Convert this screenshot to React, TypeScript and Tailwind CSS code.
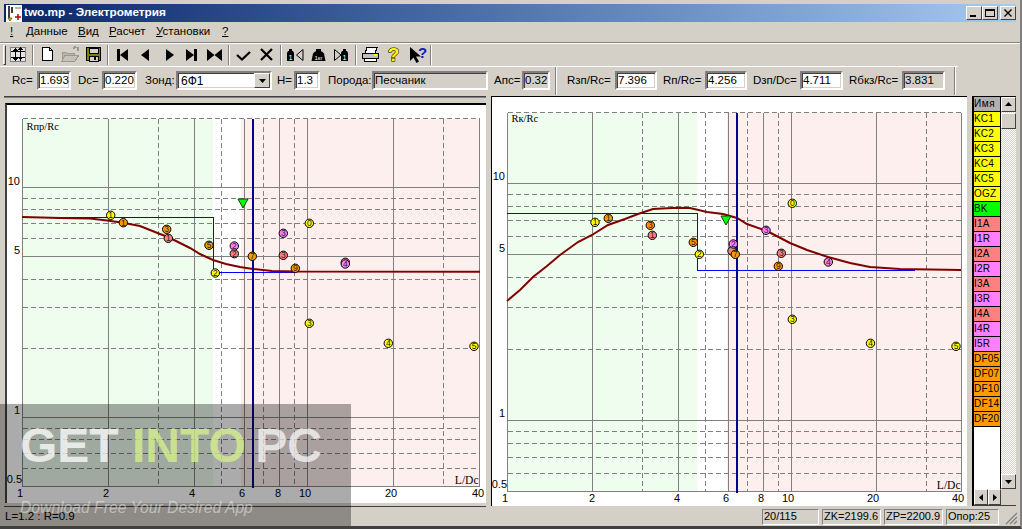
import React from 'react';

const raised = 'border border-t-white border-l-white border-r-[#404040] border-b-[#404040] bg-[#d4d0c8]';
const sunken = 'border-2 border-t-[#808080] border-l-[#808080] border-r-white border-b-white shadow-[inset_1px_1px_0_#404040,inset_-1px_-1px_0_#d4d0c8]';

const YEL = '#ffff00';
const ORG = '#ff9900';
const SAL = '#ff8080';
const VIO = '#ff80ff';

type Pt = [number, number, string, string];

interface ChartProps {
  ox: number;
  oy: number;
  w: number;
  h: number;
  left: number;
  decadeX: number;
  y10: number;
  decadeY: number;
  greenEnd: number;
  whiteEnd: number;
  title: string;
  curve: string;
  step: string;
  cursor: number;
  tri: [number, number];
  points: Pt[];
  xLabels: [string, number][];
  yLabels: [string, number, number][];
  xLabelY: number;
  titleY: number;
}

function Chart(p: ChartProps) {
  const X = (v: number) => Math.round(p.left + p.decadeX * Math.log10(v)) + 0.5;
  const Y = (v: number) => Math.round(p.y10 + p.decadeY * (1 - Math.log10(v))) + 0.5;
  const x1 = X(1);
  const x40 = X(40);
  const top = Y(20);
  const bottom = Y(0.5);
  return (
    <svg
      width={p.w}
      height={p.h}
      viewBox={`${p.ox} ${p.oy} ${p.w} ${p.h}`}
      className="block font-['Liberation_Sans',sans-serif]"
    >
      <rect x={x1} y={top} width={p.greenEnd - x1} height={bottom - top} fill="#effdee" />
      <rect x={p.whiteEnd} y={top} width={x40 - p.whiteEnd} height={bottom - top} fill="#fdefed" />
      <g stroke="#808080" strokeWidth="1" shapeRendering="crispEdges" fill="none">
        {[3, 5, 7, 9, 30].map((v) => (
          <line key={v} x1={X(v)} x2={X(v)} y1={top} y2={bottom} strokeDasharray="5 3" />
        ))}
        {[1, 2, 4, 6, 8, 10, 20, 40].map((v) => (
          <line key={v} x1={X(v)} x2={X(v)} y1={top} y2={bottom} />
        ))}
        {[20, 9, 8, 7, 6, 4, 3, 2, 0.9, 0.8, 0.7, 0.6].map((v) => (
          <line key={v} x1={x1} x2={x40} y1={Y(v)} y2={Y(v)} strokeDasharray="5 3" />
        ))}
        {[10, 5, 1, 0.5].map((v) => (
          <line key={v} x1={x1} x2={x40} y1={Y(v)} y2={Y(v)} />
        ))}
      </g>
      <polyline points={p.step} fill="none" stroke="#0000ff" strokeWidth="1" shapeRendering="crispEdges" />
      <polyline points={p.curve} fill="none" stroke="#800000" strokeWidth="2" />
      <line x1={p.cursor} x2={p.cursor} y1={top} y2={bottom + 1} stroke="#000090" strokeWidth="2" shapeRendering="crispEdges" />
      <polygon
        points={`${p.tri[0] - 5},${p.tri[1]} ${p.tri[0] + 5},${p.tri[1]} ${p.tri[0]},${p.tri[1] + 9}`}
        fill="#00ff00"
        stroke="#104010"
        strokeWidth="1"
      />
      {p.points.map(([x, y, c, t], i) => (
        <g key={i}>
          <circle cx={x} cy={y} r="4.2" fill={c} stroke="#000" strokeWidth="1" />
          {t && (
            <text x={x} y={y + 3} fontSize="8.5" textAnchor="middle" fill="#222">
              {t}
            </text>
          )}
        </g>
      ))}
      <text x={x1 + 4} y={p.titleY} fontSize="10.5" className="font-['Liberation_Serif',serif]">
        {p.title}
      </text>
      <text x={x40 - 1} y={bottom - 3} fontSize="11.5" textAnchor="end" className="font-['Liberation_Serif',serif]">
        L/Dc
      </text>
      {p.xLabels.map(([t, x]) => (
        <text key={t} x={x} y={p.xLabelY} fontSize="11" textAnchor="middle">
          {t}
        </text>
      ))}
      {p.yLabels.map(([t, x, y]) => (
        <text key={t} x={x} y={y} fontSize="11" textAnchor="end">
          {t}
        </text>
      ))}
    </svg>
  );
}

const leftChart: ChartProps = {
  ox: 7,
  oy: 105,
  w: 479,
  h: 398,
  left: 22,
  decadeX: 285,
  y10: 187,
  decadeY: 230,
  greenEnd: 213,
  whiteEnd: 241,
  title: 'Rпр/Rc',
  titleY: 130,
  cursor: 253,
  tri: [243, 199],
  curve:
    '22,217 32,217.3 60,218 90,218.5 107,220.5 123,222.7 140,226 160,234 168,237 190,248 200,254 213,260 226,264 240,267 253,269 272,271 296,271.6 480,271.8',
  step: '22,217.5 213.5,217.5 213.5,272.5 296,272.5',
  xLabelY: 497,
  xLabels: [['1', 20], ['2', 106], ['4', 192], ['6', 242], ['8', 278], ['10', 305], ['20', 391], ['40', 478]],
  yLabels: [['10', 20, 185], ['5', 20, 254], ['1', 20, 414], ['0.5', 22, 483]],
  points: [
    [110.7, 215.3, YEL, '1'], [123.3, 222.7, ORG, '1'], [166.7, 229.3, ORG, '3'], [168.3, 238.3, SAL, '1'],
    [209, 245.3, ORG, '5'], [215.3, 273, YEL, '2'], [234.3, 253.7, SAL, '2'], [234.3, 246, VIO, '2'],
    [252.3, 256.3, ORG, '7'], [283.3, 233.3, VIO, '3'], [283.3, 255.3, SAL, '3'], [295.3, 268.3, ORG, '9'],
    [309.3, 223.3, YEL, '0'], [345.3, 262.3, SAL, ''], [345.3, 264, VIO, '4'], [309.3, 323.3, YEL, '3'],
    [388.3, 343.3, YEL, '4'], [474, 346.3, YEL, '5'],
  ],
};

const rightChart: ChartProps = {
  ox: 492,
  oy: 97,
  w: 475,
  h: 409,
  left: 507,
  decadeX: 283.5,
  y10: 183,
  decadeY: 237,
  greenEnd: 697,
  whiteEnd: 727,
  title: 'Rк/Rc',
  titleY: 122,
  cursor: 737,
  tri: [726, 216],
  curve:
    '507,301 520,290 533,277 547,266 560,255 578,242 592,235 608,225 625,219 638,214 653,209 677,207.7 690,208 707,212 723,214 737,218 747,224 767,231 790,243 807,250 828,257 850,263 870,267 900,269 961,270',
  step: '507,213.5 697.5,213.5 697.5,270.5 915,270.5',
  xLabelY: 502,
  xLabels: [['1', 505], ['2', 592], ['4', 677], ['6', 726], ['8', 761], ['10', 788], ['20', 873], ['40', 958]],
  yLabels: [['10', 505, 180], ['5', 505, 252], ['1', 505, 417], ['0.5', 507, 488]],
  points: [
    [595, 222.3, YEL, '1'], [608.3, 218.3, ORG, '1'], [650.3, 225.3, ORG, '3'], [652.3, 235.3, SAL, '1'],
    [693.3, 242.3, ORG, '5'], [699.3, 254.3, YEL, '2'], [732, 251, SAL, ''], [733.3, 244, VIO, '2'],
    [735.3, 254.3, ORG, '7'], [766, 230.3, VIO, '3'], [781.3, 253.3, SAL, '3'], [778.3, 266.3, ORG, '9'],
    [792.3, 203.3, YEL, '0'], [828.3, 262, VIO, '4'], [792.3, 319.3, YEL, '3'], [870.5, 343.3, YEL, '4'],
    [956, 346.3, YEL, '5'],
  ],
};

const rows: [string, string][] = [
  ['KC1', 'bg-[#ffff00]'], ['KC2', 'bg-[#ffff00]'], ['KC3', 'bg-[#ffff00]'], ['KC4', 'bg-[#ffff00]'],
  ['KC5', 'bg-[#ffff00]'], ['OGZ', 'bg-[#ffff00]'], ['BK', 'bg-[#00ff00]'], ['I1A', 'bg-[#ff8080]'],
  ['I1R', 'bg-[#ff80ff]'], ['I2A', 'bg-[#ff8080]'], ['I2R', 'bg-[#ff80ff]'], ['I3A', 'bg-[#ff8080]'],
  ['I3R', 'bg-[#ff80ff]'], ['I4A', 'bg-[#ff8080]'], ['I4R', 'bg-[#ff80ff]'], ['I5R', 'bg-[#ff80ff]'],
  ['DF05', 'bg-[#ff9900]'], ['DF07', 'bg-[#ff9900]'], ['DF10', 'bg-[#ff9900]'], ['DF14', 'bg-[#ff9900]'],
  ['DF20', 'bg-[#ff9900]'],
];

// toolbar icons, all drawn on a 23x22 box
function Ico({ children }: { children: React.ReactNode }) {
  return (
    <div className="w-[23px] h-[22px] shrink-0">
      <svg width="23" height="22" viewBox="0 1 23 22" className="block">
        {children}
      </svg>
    </div>
  );
}

function Sep() {
  return <div className="w-[2px] h-[20px] mx-[2px] shrink-0 border-l border-l-[#808080] border-r border-r-white" />;
}

const icons = {
  tune: (
    <g shapeRendering="crispEdges">
      <rect x="3.5" y="4.5" width="15" height="14" fill="#e4e4e4" stroke="#808080" />
      <path d="M4 8.5h14M4 14.5h14" stroke="#000" />
      <path d="M8.5 5v13M13.5 5v13" stroke="#000" />
      <path d="M6 8l2.5-3 2.5 3zM6 15l2.5 3 2.5-3zM11 7l2.5-3 2.5 3zM11 14l2.5 3 2.5-3z" fill="#000" />
    </g>
  ),
  doc: (
    <path d="M6.5 4.5h7l3 3v10h-10zM13.5 4.5v3h3" fill="#fff" stroke="#000" shapeRendering="crispEdges" />
  ),
  open: (
    <g shapeRendering="crispEdges">
      <path d="M3 9h4l1 1h7v8H3z" fill="#b8b4ac" stroke="#a09c94" />
      <path d="M6 12h14l-4 6H3z" fill="#c6c2ba" stroke="#9c9890" />
      <path d="M14 6l2-2 3 1v3" fill="none" stroke="#9c9890" strokeWidth="1.5" />
    </g>
  ),
  save: (
    <g shapeRendering="crispEdges">
      <rect x="4.5" y="4.5" width="14" height="13" fill="#808000" stroke="#000" />
      <rect x="7" y="5" width="9" height="5" fill="#d4d0c8" stroke="#000" />
      <rect x="7" y="13" width="9" height="5" fill="#d4d0c8" stroke="#000" />
      <rect x="12" y="14" width="2" height="3" fill="#000" />
    </g>
  ),
  first: <path d="M6 6h3v12H6zM17 6v12l-8-6z" fill="#000" />,
  prev: <path d="M15 6v12l-8-6z" fill="#000" />,
  next: <path d="M9 6v12l8-6z" fill="#000" />,
  last: <path d="M6 6v12l8-6zM14 6h3v12h-3z" fill="#000" />,
  both: <path d="M4 6v12l7.500-6zM11.500 12l7.500-6v12z" fill="#000" />,
  check: <path d="M5 12l5 4.500L18 9" fill="none" stroke="#000" strokeWidth="2.200" />,
  cross: <path d="M6 6l11 11M17 6L6 17" fill="none" stroke="#000" strokeWidth="2.200" />,
  prevWeight: (
    <g>
      <path d="M5 6h3v2h1l1 2v8H3v-8l1-2h1z" fill="#000" />
      <text x="6.500" y="16.500" fontSize="7.500" textAnchor="middle" fill="#fff">1</text>
      <path d="M19 6.500v11l-6.500-5.500z" fill="none" stroke="#000" />
    </g>
  ),
  weight: (
    <g>
      <path d="M9 6h5v2.500h1l2 2 1.500 7.500H4.500L6 10.500l2-2h1z" fill="#000" />
      <text x="11.500" y="17" fontSize="6" textAnchor="middle" fill="#fff">1кг</text>
    </g>
  ),
  nextWeight: (
    <g>
      <path d="M4.500 6.500v11l6.500-5.500z" fill="none" stroke="#000" />
      <path d="M13 6h3v2h1l1 2v8h-7v-8l1-2h1z" fill="#000" />
      <text x="14.500" y="16.500" fontSize="7.500" textAnchor="middle" fill="#fff">1</text>
    </g>
  ),
  print: (
    <g shapeRendering="crispEdges">
      <path d="M8 4.500h10l-2 6H6z" fill="#fff" stroke="#000" />
      <path d="M3.500 10.500h16v5h-16z" fill="#c0c0c0" stroke="#000" />
      <path d="M5.500 15.500h12v3h-12z" fill="#fff" stroke="#000" />
      <path d="M15 12h3" stroke="#ffff00" strokeWidth="2" />
    </g>
  ),
  help: (
    <text x="11.500" y="18" fontSize="19" fontWeight="700" textAnchor="middle" fill="#ffff00" stroke="#000" strokeWidth="1.100" paintOrder="stroke">
      ?
    </text>
  ),
  what: (
    <g>
      <path d="M5 4v14l3.500-3.500 3 5.500 2.500-1.500-3-5h5z" fill="#000" />
      <text x="17.500" y="15" fontSize="15" fontWeight="700" textAnchor="middle" fill="#1020b0">?</text>
    </g>
  ),
};

function Tool({ name }: { name: keyof typeof icons }) {
  return <Ico>{icons[name]}</Ico>;
}

function Field({ v, w, ro }: { v: string; w: string; ro?: boolean }) {
  return (
    <div className={`${w} h-[19px] shrink-0 ${sunken} ${ro ? 'bg-[#d4d0c8]' : 'bg-white'} flex items-center pl-[1px] text-[11.5px] leading-none overflow-hidden`}>
      {v}
    </div>
  );
}

function Label({ t, className }: { t: string; className: string }) {
  return <span className={`${className} shrink-0 text-[11.5px] whitespace-nowrap`}>{t}</span>;
}

function ScrollBtn({ d, className }: { d: string; className: string }) {
  return (
    <div className={`${raised} ${className} shrink-0 flex items-center justify-center`}>
      <svg width="9" height="9" viewBox="0 0 9 9">
        <path d={d} fill="#000" />
      </svg>
    </div>
  );
}

function StatusCell({ t, w }: { t: string; w: string }) {
  return (
    <div className={`${w} h-[16px] shrink-0 flex items-center pl-[1px] text-[11px] border border-t-[#808080] border-l-[#808080] border-r-white border-b-white whitespace-nowrap`}>
      {t}
    </div>
  );
}

export default function App() {
  return (
    <div className="relative w-[1022px] h-[529px] overflow-hidden bg-[#d4d0c8] text-black font-['Liberation_Sans',Arial,sans-serif] flex flex-col pt-[4px] border-b-[3px] border-b-[#404040] border-r-[2px] border-r-[#808080]">
      {/* title bar */}
      <div className="mx-[4px] h-[18px] shrink-0 flex items-center bg-gradient-to-r from-[#0a246a] to-[#a6caf0]">
        <svg width="17" height="17" viewBox="0 0 17 17" className="ml-[2px]">
          <rect x="0" y="0" width="16" height="17" fill="#fff" />
          <path d="M3 1v12M6 2v6" stroke="#000" strokeWidth="1.500" />
          <path d="M2 13l2 3 2-3zM9 3h6" fill="#e0c000" stroke="#807000" />
          <path d="M9 12h6M12 9v6" stroke="#c00000" strokeWidth="1.500" />
        </svg>
        <span className="ml-[1px] text-white font-bold text-[11.8px] leading-none">two.mp - Электрометрия</span>
        <div className="ml-auto flex">
          <div className={`${raised} w-[16px] h-[14px] flex items-end pl-[3px] pb-[2px]`}>
            <div className="w-[6px] h-[2px] bg-black" />
          </div>
          <div className={`${raised} w-[16px] h-[14px] p-[2px]`}>
            <div className="w-full h-full border border-black border-t-2" />
          </div>
          <div className={`${raised} w-[16px] h-[14px] ml-[2px] flex items-center justify-center`}>
            <svg width="8" height="8" viewBox="0 0 8 8">
              <path d="M0.500 0.500l7 7M7.500 0.500l-7 7" stroke="#000" strokeWidth="1.400" />
            </svg>
          </div>
        </div>
      </div>

      {/* menu */}
      <div className="h-[20px] shrink-0 flex items-center pl-[10px] text-[11.5px]">
        <span className="underline w-[16px]">!</span>
        <span className="w-[52px]"><u>Д</u>анные</span>
        <span className="w-[31px]"><u>В</u>ид</span>
        <span className="w-[47px]"><u>Р</u>асчет</span>
        <span className="w-[66px]"><u>У</u>становки</span>
        <span className="underline">?</span>
      </div>
      <div className="h-[2px] shrink-0 border-t border-t-[#808080] border-b border-b-white" />

      {/* toolbar */}
      <div className="h-[22px] shrink-0 flex items-center pl-[3px]">
        <div className={`${raised} w-[3px] h-[20px] mr-[1px] shrink-0`} />
        <Tool name="tune" />
        <Sep />
        <Tool name="doc" />
        <Tool name="open" />
        <Tool name="save" />
        <Sep />
        <Tool name="first" />
        <Tool name="prev" />
        <Tool name="next" />
        <Tool name="last" />
        <Tool name="both" />
        <Sep />
        <Tool name="check" />
        <Tool name="cross" />
        <Sep />
        <Tool name="prevWeight" />
        <Tool name="weight" />
        <Tool name="nextWeight" />
        <Sep />
        <Tool name="print" />
        <Tool name="help" />
        <Tool name="what" />
        <Sep />
      </div>

      {/* params */}
      <div className="w-[958px] h-[30px] shrink-0 flex items-center pl-[4px] pb-[2px] border-t border-t-white">
        <Label t="Rc=" className="ml-[8px] w-[25px]" />
        <Field v="1.693" w="w-[34px]" />
        <Label t="Dc=" className="ml-[7px] w-[24px]" />
        <Field v="0.220" w="w-[35px]" />
        <Label t="Зонд:" className="ml-[8px] w-[31px]" />
        <div className={`w-[96px] h-[19px] shrink-0 ${sunken} bg-white flex items-center justify-between text-[12px] pl-[3px]`}>
          6Ф1
          <ScrollBtn d="M1 3h7L4.500 7z" className="w-[16px] h-[15px]" />
        </div>
        <Label t="H=" className="ml-[5px] w-[17px]" />
        <Field v="1.3" w="w-[26px]" />
        <Label t="Порода:" className="ml-[8px] w-[44px]" />
        <Field v="Песчаник" w="w-[116px]" ro />
        <Label t="Апс=" className="ml-[6px] w-[28px]" />
        <Field v="0.32" w="w-[28px]" ro />
        <div className="ml-[5px] w-[2px] h-[28px] shrink-0 border-l border-l-[#808080] border-r border-r-white" />
        <Label t="Rзп/Rc=" className="ml-[10px] w-[48px]" />
        <Field v="7.396" w="w-[42px]" />
        <Label t="Rп/Rc=" className="ml-[6px] w-[42px]" />
        <Field v="4.256" w="w-[42px]" />
        <Label t="Dзп/Dc=" className="ml-[6px] w-[47px]" />
        <Field v="4.711" w="w-[43px]" />
        <Label t="Rбкз/Rc=" className="ml-[6px] w-[53px]" />
        <Field v="3.831" w="w-[43px]" ro />
        <div className="ml-[9px] w-[2px] h-[28px] shrink-0 border-l border-l-[#808080] border-r border-r-white" />
      </div>

      {/* charts + list */}
      <div className="h-[411px] shrink-0 flex pl-[4px]">
        <div className="w-[482px] shrink-0 flex flex-col">
          <div className="h-[2px] shrink-0 bg-[#404040] border-b border-b-[#808080]" />
          <div className="ml-[1px] mt-[5px] h-[400px] shrink-0 border-t-2 border-t-black border-l-2 border-l-[#404040] bg-white">
            <Chart {...leftChart} />
          </div>
          <div className="mt-[3px] h-[1px] bg-[#404040]" />
        </div>
        <div className="ml-[5px] w-[476px] shrink-0 h-[410px] border-t border-t-black border-l border-l-black bg-white">
          <Chart {...rightChart} />
        </div>
        <div className="ml-[5px] w-[44px] h-[410px] shrink-0 flex flex-col border-t border-t-black border-l-2 border-l-black border-b border-b-[#404040]">
          <div className="flex flex-1 min-h-0">
            <div className="w-[27px] shrink-0 bg-white flex flex-col border-r border-r-black">
              <div className="h-[15px] shrink-0 bg-[#b0b0b0] border-b border-b-black text-[10px] leading-[14px] tracking-[0.6px]">Имя</div>
              {rows.map(([t, c]) => (
                <div key={t} className={`h-[15px] shrink-0 ${c} border-b border-b-black text-[10px] leading-[14px] tracking-[0.2px] overflow-hidden whitespace-nowrap`}>
                  {t}
                </div>
              ))}
            </div>
            <div className="w-[15px] shrink-0 flex flex-col bg-[repeating-conic-gradient(#d4d0c8_0_25%,#fff_0_50%)] bg-[length:2px_2px]">
              <ScrollBtn d="M1 6h7L4.500 2z" className="w-[15px] h-[15px]" />
              <div className={`${raised} w-[15px] h-[16px] shrink-0 mt-[1px]`} />
              <ScrollBtn d="M1 3h7L4.500 7z" className="w-[15px] h-[15px] mt-auto" />
            </div>
          </div>
          <div className="h-[16px] shrink-0 flex bg-[#d4d0c8]">
            <ScrollBtn d="M6 1v7L2 4.500z" className="w-[14px] h-[16px]" />
            <ScrollBtn d="M3 1v7l4-3.500z" className="w-[13px] h-[16px]" />
          </div>
        </div>
      </div>

      {/* status */}
      <div className="h-[19px] shrink-0 flex items-center pl-[5px] text-[11.5px] leading-none">
        <span className="w-[757px] shrink-0">L=1.2 : R=0.9</span>
        <div className="flex gap-[3px]">
          <StatusCell t="20/115" w="w-[57px]" />
          <StatusCell t="ZK=2199.6" w="w-[59px]" />
          <StatusCell t="ZP=2200.9" w="w-[59px]" />
          <StatusCell t="Опор:25" w="w-[53px]" />
        </div>
        <svg width="14" height="14" viewBox="0 0 14 14" className="ml-auto mr-[2px] mt-[2px]">
          <path d="M13 2L2 13M13 6L6 13M13 10l-3 3" stroke="#808080" strokeWidth="1.300" />
        </svg>
      </div>

      {/* watermark */}
      <div className="absolute left-0 top-[404px] w-[351px] h-[125px] bg-black/[0.33] pointer-events-none">
        <div className="absolute left-[20px] top-[12px] text-[48px] leading-[60px] font-bold whitespace-nowrap">
          <span className="text-white/75">GET </span>
          <span className="text-[#d4f08c]/80">INTO </span>
          <span className="text-white/70 -ml-[4px]">PC</span>
        </div>
        <div className="absolute left-[20px] top-[92px] text-[15.7px] leading-[24px] italic text-white/45 whitespace-nowrap">
          Download Free Your Desired App
        </div>
      </div>
    </div>
  );
}
